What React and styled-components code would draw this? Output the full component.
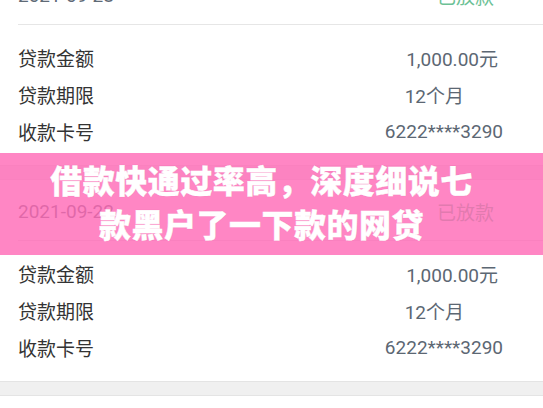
import React from "react";
import styled, { createGlobalStyle } from "styled-components";

const GlobalStyle = createGlobalStyle`
  html, body {
    margin: 0;
    padding: 0;
    background: #f0f0f0;
  }
  body {
    font-family: "Roboto", "Noto Sans CJK SC", sans-serif;
  }
`;

const Page = styled.div`
  position: relative;
  width: 543px;
  height: 408px;
  overflow: hidden;
  background: #f0f0f0;
`;

const List = styled.div`
  display: flex;
  flex-direction: column;
  gap: 15px;
  margin-top: -36px;
`;

const Card = styled.div`
  background: #fff;
  box-shadow: 0 1px 0 #e4e4e4, 0 -1px 0 #e4e4e4;
`;

const Header = styled.div`
  display: flex;
  justify-content: space-between;
  align-items: center;
  height: 24px;
  padding: 20px 49px 16px 18px;
  font-size: 19px;
  line-height: 24px;
`;

const Date = styled.span`
  color: #5f6a76;
  font-family: "Roboto", sans-serif;
`;

const Status = styled.span`
  color: #6cc195;
  font-family: "Noto Sans CJK SC", sans-serif;
`;

const Divider = styled.div`
  height: 1px;
  margin-left: 18px;
  background: #e6e6e6;
`;

const Rows = styled.div`
  display: flex;
  flex-direction: column;
  padding: 14px 0 15px;
`;

const Row = styled.div`
  display: grid;
  grid-template-columns: 1fr auto;
  align-items: center;
  height: 37px;
  padding-left: 18px;
  font-size: 19px;
`;

const Label = styled.span`
  color: #333;
  font-family: "Noto Sans CJK SC", sans-serif;
`;

const Value = styled.span`
  color: #5c6773;
  font-family: "Roboto", "Noto Sans CJK SC", sans-serif;
  padding-right: ${(props) => props.inset}px;
`;

const Banner = styled.div`
  position: absolute;
  left: 0;
  right: 0;
  top: 153px;
  height: 102px;
  box-sizing: border-box;
  display: flex;
  align-items: center;
  justify-content: center;
  padding: 0 20px 6px 0;
  background: rgba(255, 104, 181, 0.8);
`;

const Title = styled.h1`
  margin: 0;
  color: #fff;
  font-family: "Noto Sans CJK SC", sans-serif;
  font-weight: 900;
  font-size: 32px;
  line-height: 44px;
  letter-spacing: 0.5px;
  text-align: center;
  -webkit-text-stroke: 0.4px #fff;
  text-shadow: 0 0 1px rgba(120, 30, 80, 0.2);
`;

const loans = [
  { date: "2021-09-28", status: "已放款" },
  { date: "2021-09-22", status: "已放款" },
  { date: "2021-09-15", status: "已放款" },
];

const details = [
  { label: "贷款金额", value: "1,000.00元", inset: 45 },
  { label: "贷款期限", value: "12个月", inset: 79 },
  { label: "收款卡号", value: "6222****3290", inset: 40 },
];

function App() {
  return (
    <Page>
      <GlobalStyle />
      <List>
        {loans.map((loan, i) => (
          <Card key={i}>
            <Header>
              <Date>{loan.date}</Date>
              <Status>{loan.status}</Status>
            </Header>
            <Divider />
            <Rows>
              {details.map((d) => (
                <Row key={d.label}>
                  <Label>{d.label}</Label>
                  <Value inset={d.inset}>{d.value}</Value>
                </Row>
              ))}
            </Rows>
          </Card>
        ))}
      </List>
      <Banner>
        <Title>
          借款快通过率高，深度细说七
          <br />
          款黑户了一下款的网贷
        </Title>
      </Banner>
    </Page>
  );
}

export default App;
